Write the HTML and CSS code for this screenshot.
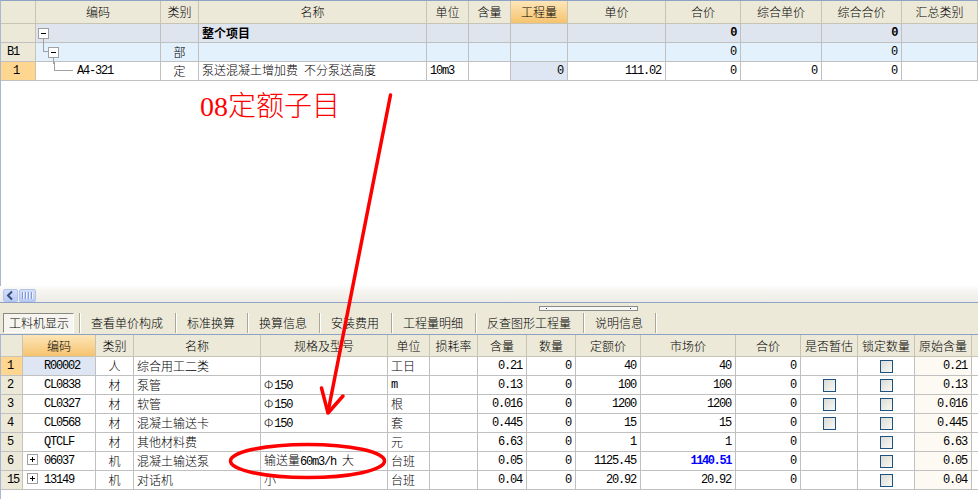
FILE: index.html
```html
<!DOCTYPE html>
<html lang="zh-CN">
<head>
<meta charset="utf-8">
<title>工料机显示</title>
<link rel="stylesheet" href="styles.css">
</head>
<body>
<div class="app">
  <section class="top-pane">
    <table class="grid grid-top">
      <colgroup>
        <col class="w35"><col class="w125"><col class="w38"><col class="w228"><col class="w42"><col class="w42"><col class="w57"><col class="w98"><col class="w75"><col class="w81"><col class="w80"><col class="w76">
      </colgroup>
      <thead>
        <tr class="hdr-top">
          <th class="rh"></th><th>编码</th><th>类别</th><th>名称</th><th>单位</th><th>含量</th><th class="sel">工程量</th><th>单价</th><th>合价</th><th>综合单价</th><th>综合合价</th><th>汇总类别</th>
        </tr>
      </thead>
      <tbody>
        <tr class="row-root">
          <td class="rh"></td>
          <td class="tree"><div class="tcell"><span class="tbox minus down l2"></span></div></td>
          <td></td>
          <td class="b">整个项目</td>
          <td></td><td></td><td></td><td></td>
          <td class="n b">0</td><td></td><td class="n b">0</td><td></td>
        </tr>
        <tr class="row-b1">
          <td class="rh m">B1</td>
          <td class="tree"><div class="tcell"><span class="elbow e1"></span><span class="tbox minus down"></span></div></td>
          <td class="c">部</td>
          <td></td>
          <td></td><td></td><td></td><td></td>
          <td class="n">0</td><td></td><td class="n">0</td><td></td>
        </tr>
        <tr class="row-item">
          <td class="rh rh-sel m one">1</td>
          <td class="tree"><div class="tcell"><span class="elbow e2"></span><span class="m code-t">A4-321</span></div></td>
          <td class="c">定</td>
          <td>泵送混凝土增加费<span class="m">&nbsp;</span>不分泵送高度</td>
          <td class="m">10m3</td><td></td><td class="n cur">0</td><td class="n">111.02</td>
          <td class="n">0</td><td class="n">0</td><td class="n">0</td><td></td>
        </tr>
      </tbody>
    </table>
  </section>

  <div class="hscroll">
    <span class="sbtn"><svg width="13" height="11" viewBox="0 0 13 11"><polyline points="8,1.5 4,5.5 8,9.5" fill="none" stroke="#3b4d7c" stroke-width="2"/></svg></span>
    <span class="sthumb"><i></i><i></i><i></i><i></i></span>
  </div>

  <div class="tabbar">
    <div class="handle"><i></i><i></i></div>
    <nav class="tabs">
      <span class="tab active">工料机显示</span><span class="sep"></span>
      <span class="tab">查看单价构成</span><span class="sep"></span>
      <span class="tab">标准换算</span><span class="sep"></span>
      <span class="tab">换算信息</span><span class="sep"></span>
      <span class="tab">安装费用</span><span class="sep"></span>
      <span class="tab">工程量明细</span><span class="sep"></span>
      <span class="tab">反查图形工程量</span><span class="sep"></span>
      <span class="tab">说明信息</span><span class="sep"></span>
    </nav>
  </div>

  <section class="bottom-pane">
    <table class="grid grid-bot">
      <colgroup>
        <col class="w22"><col class="w73"><col class="w38"><col class="w127"><col class="w127"><col class="w42"><col class="w48"><col class="w49"><col class="w49"><col class="w65"><col class="w95"><col class="w65"><col class="w57"><col class="w57"><col class="w57"><col class="w6">
      </colgroup>
      <thead>
        <tr class="hdr-bot">
          <th class="rh"></th><th class="sel">编码</th><th>类别</th><th>名称</th><th>规格及型号</th><th>单位</th><th>损耗率</th><th>含量</th><th>数量</th><th>定额价</th><th>市场价</th><th>合价</th><th>是否暂估</th><th>锁定数量</th><th>原始含量</th><th class="fill"></th>
        </tr>
      </thead>
      <tbody>
        <tr>
          <td class="rh rh-sel m">1</td><td class="m code cur">R00002</td><td class="c">人</td><td>综合用工二类</td><td></td><td>工日</td><td></td>
          <td class="n">0.21</td><td class="n">0</td><td class="n">40</td><td class="n">40</td><td class="n">0</td><td></td><td class="c"><span class="cb"></span></td><td class="n orig">0.21</td><td class="fill"></td>
        </tr>
        <tr>
          <td class="rh m">2</td><td class="m code">CL0838</td><td class="c">材</td><td>泵管</td><td><span class="phi">Φ</span><span class="m">150</span></td><td class="m">m</td><td></td>
          <td class="n">0.13</td><td class="n">0</td><td class="n">100</td><td class="n">100</td><td class="n">0</td><td class="c"><span class="cb"></span></td><td class="c"><span class="cb"></span></td><td class="n orig">0.13</td><td class="fill"></td>
        </tr>
        <tr>
          <td class="rh m">3</td><td class="m code">CL0327</td><td class="c">材</td><td>软管</td><td><span class="phi">Φ</span><span class="m">150</span></td><td>根</td><td></td>
          <td class="n">0.016</td><td class="n">0</td><td class="n">1200</td><td class="n">1200</td><td class="n">0</td><td class="c"><span class="cb"></span></td><td class="c"><span class="cb"></span></td><td class="n orig">0.016</td><td class="fill"></td>
        </tr>
        <tr>
          <td class="rh m">4</td><td class="m code">CL0568</td><td class="c">材</td><td>混凝土输送卡</td><td><span class="phi">Φ</span><span class="m">150</span></td><td>套</td><td></td>
          <td class="n">0.445</td><td class="n">0</td><td class="n">15</td><td class="n">15</td><td class="n">0</td><td class="c"><span class="cb"></span></td><td class="c"><span class="cb"></span></td><td class="n orig">0.445</td><td class="fill"></td>
        </tr>
        <tr>
          <td class="rh m">5</td><td class="m code">QTCLF</td><td class="c">材</td><td>其他材料费</td><td></td><td>元</td><td></td>
          <td class="n">6.63</td><td class="n">0</td><td class="n">1</td><td class="n">1</td><td class="n">0</td><td></td><td class="c"><span class="cb"></span></td><td class="n orig">6.63</td><td class="fill"></td>
        </tr>
        <tr>
          <td class="rh m">6</td><td class="m code-p"><span class="tbox plus"></span>06037</td><td class="c">机</td><td>混凝土输送泵</td><td>输送量<span class="m">60m3/h&nbsp;</span>大</td><td>台班</td><td></td>
          <td class="n">0.05</td><td class="n">0</td><td class="n">1125.45</td><td class="n hl">1140.51</td><td class="n">0</td><td></td><td class="c"><span class="cb"></span></td><td class="n orig">0.05</td><td class="fill"></td>
        </tr>
        <tr>
          <td class="rh m">15</td><td class="m code-p"><span class="tbox plus"></span>13149</td><td class="c">机</td><td>对话机</td><td>小</td><td>台班</td><td></td>
          <td class="n">0.04</td><td class="n">0</td><td class="n">20.92</td><td class="n">20.92</td><td class="n">0</td><td></td><td class="c"><span class="cb"></span></td><td class="n orig">0.04</td><td class="fill"></td>
        </tr>
      </tbody>
    </table>
  </section>
</div>

<div class="note">08定额子目</div>
<svg class="marks" width="978" height="499" viewBox="0 0 978 499" aria-hidden="true">
  <path d="M390.5 95 L328 412" fill="none" stroke="#ff0000" stroke-width="3.5" stroke-linecap="round"/>
  <path d="M321.5 388 L328 413 L343 396" fill="none" stroke="#ff0000" stroke-width="3.5" stroke-linecap="round" stroke-linejoin="round"/>
  <ellipse cx="307.5" cy="461" rx="77" ry="16.5" fill="none" stroke="#ff0000" stroke-width="3.5"/>
</svg>
</body>
</html>
```

FILE: styles.css
```css
* { box-sizing: border-box; }
html, body { margin: 0; padding: 0; }
body {
  width: 978px;
  height: 499px;
  overflow: hidden;
  position: relative;
  background: #ffffff;
  font-family: "Noto Sans CJK SC", "Noto Sans", sans-serif;
  font-size: 12px;
  font-weight: 300;
  color: #000;
}
.app { display: flex; flex-direction: column; height: 499px; }

/* panes */
.top-pane {
  height: 286px;
  border-top: 1px solid #8ea3c3;
  border-left: 1px solid #a8b8d0;
  background: #fff;
}
.bottom-pane {
  flex: 1;
  border-top: 1px solid #8ea3c3;
  border-left: 1px solid #a8b8d0;
  background: #fff;
}

/* grids */
.grid {
  border-collapse: separate;
  border-spacing: 0;
  table-layout: fixed;
  width: 977px;
}
.grid th, .grid td {
  padding: 0 3px;
  border-right: 1px solid #c0c0c0;
  border-bottom: 1px solid #c0c0c0;
  white-space: nowrap;
  overflow: hidden;
  font-weight: 300;
  vertical-align: middle;
  line-height: 16px;
  text-align: left;
}
.grid th {
  background: #ece9d8;
  text-align: center;
  border-right-color: #c7c4b4;
  border-bottom-color: #c7c4b4;
}
.grid th.sel { background: linear-gradient(#fde6b8, #f6c36f); }
.grid tbody tr { height: 19px; }
.grid td { height: 19px; }
.hdr-top { height: 23px; }
.hdr-top th { height: 23px; }
.hdr-bot { height: 22px; }
.hdr-bot th { height: 22px; }

.rh { background: #ece9d8; }
.grid td.rh { background: #ece9d8; padding-left: 6px; border-right-color: #c7c4b4; }
.grid td.rh-sel { background: #fed690; }
.grid td.one { padding-left: 12px; }

.row-root td { background: #dfe5ee; }
.row-b1 td { background: #e2f1fb; }
.grid td.cur { background: #dde6f2; }

.grid td.b { font-weight: bold; }
.grid td.c { text-align: center; }

.m, .n, .code, .code-t {
  font-family: "Liberation Mono", "DejaVu Sans Mono", monospace;
  font-weight: normal;
  letter-spacing: -1.2px;
}
.grid td.m, .grid td.n, .grid td.code { font-weight: normal; }
.grid td.n { text-align: right; padding-right: 4px; }
.grid td.n.b { font-weight: bold; letter-spacing: -1.4px; }
.grid td.hl { color: #0000ff; font-weight: bold; letter-spacing: -1.4px; }
.grid td.code { padding-left: 21px; }
.grid td.code-p { padding-left: 4px; }
.grid td.orig { background: #fdfaf3; }
.grid .fill { background: #fff; border-right: none; padding: 0; }
.grid th.fill { background: #ece9d8; }
.phi { font-family: "Noto Sans CJK SC", sans-serif; margin-right: 1px; }

/* tree */
.grid td.tree { padding: 0; overflow: visible; }
.tcell { display: flex; align-items: center; height: 18px; }
.tbox {
  position: relative;
  display: inline-block;
  width: 11px;
  height: 11px;
  border: 1px solid #a0a0a0;
  background: #fff;
  flex: none;
  vertical-align: middle;
}
.tbox::before {
  content: "";
  position: absolute;
  left: 2px;
  top: 4px;
  width: 5px;
  height: 1px;
  background: #000;
}
.tbox.plus::after {
  content: "";
  position: absolute;
  left: 4px;
  top: 2px;
  width: 1px;
  height: 5px;
  background: #000;
}
.tbox.plus { margin-right: 6px; margin-top: -2px; }
.tbox.down::after {
  content: "";
  position: absolute;
  left: 4px;
  top: 10px;
  height: 6px;
  border-left: 1px solid #a0a0a0;
}
.tbox.l2 { margin-left: 2px; }
.elbow {
  align-self: flex-start;
  flex: none;
  border-left: 1px solid #a0a0a0;
  border-bottom: 1px solid #a0a0a0;
  height: 9px;
}
.e1 { width: 5px; margin-left: 7px; }
.e2 { width: 19px; margin-left: 18px; }
.code-t { margin-left: 4px; }

/* checkbox */
.cb {
  display: inline-block;
  width: 13px;
  height: 13px;
  border: 1px solid #1c5180;
  background: linear-gradient(135deg, #dcdcd5, #f8f8f5);
  vertical-align: middle;
  margin-top: -2px;
}

/* scrollbar */
.hscroll {
  height: 17px;
  border-bottom: 1px solid #8ea3c3;
  background: linear-gradient(#fdfdfc 0%, #f6f5f1 30%, #edece6 100%);
  display: flex;
  align-items: flex-start;
  padding: 3px 0 0 3px;
}
.sbtn, .sthumb {
  height: 13px;
  border: 1px solid #b3c4ec;
  border-radius: 2px;
  background: linear-gradient(#d4defa, #b9cbf6);
  display: flex;
  align-items: center;
  justify-content: center;
}
.sbtn { width: 15px; }
.sbtn svg { display: block; }
.sthumb { width: 17px; margin-left: 1px; gap: 1px; }
.sthumb i {
  display: block;
  width: 1px;
  height: 7px;
  background: #8799d4;
  box-shadow: 1px 0 0 #eef2fd;
  margin-right: 1px;
}

/* tab bar */
.tabbar {
  height: 31px;
  background: #ece9d8;
  display: flex;
  flex-direction: column;
  padding-top: 3px;
}
.handle {
  margin-left: 539px;
  width: 99px;
  height: 5px;
  border: 1px solid #8a8a8a;
  background: #f7f7f4;
  display: flex;
  justify-content: space-between;
  align-items: center;
  padding: 0 6px;
}
.handle i { display: block; width: 1px; height: 1px; background: #203070; }
.tabs {
  margin-top: 2px;
  height: 20px;
  display: flex;
  align-items: stretch;
  padding-left: 3px;
}
.tab {
  padding: 0 6px;
  line-height: 18px;
  white-space: nowrap;
  border: 1px solid transparent;
}
.tab.active {
  padding: 0 4px 0 5px;
  border-color: #8a8a85 #ffffff #ffffff #8a8a85;
  background: #f6f5f0;
}
.sep {
  width: 2px;
  margin: 0 3px 0 5px;
  border-left: 1px solid #aca899;
  border-right: 1px solid #ffffff;
}

/* annotations */
.note {
  position: absolute;
  left: 200px;
  top: 89px;
  font-family: "Liberation Serif", "Noto Sans CJK SC", serif;
  font-size: 28px;
  font-weight: 300;
  line-height: 36px;
  color: #ff0000;
  white-space: nowrap;
}
.marks { position: absolute; left: 0; top: 0; pointer-events: none; }

/* columns */
.w6 { width: 6px; } .w22 { width: 22px; } .w35 { width: 35px; } .w38 { width: 38px; }
.w42 { width: 42px; } .w48 { width: 48px; } .w49 { width: 49px; } .w57 { width: 57px; }
.w65 { width: 65px; } .w73 { width: 73px; } .w75 { width: 75px; } .w76 { width: 76px; }
.w80 { width: 80px; } .w81 { width: 81px; } .w95 { width: 95px; } .w98 { width: 98px; }
.w125 { width: 125px; } .w127 { width: 127px; } .w228 { width: 228px; }
```
